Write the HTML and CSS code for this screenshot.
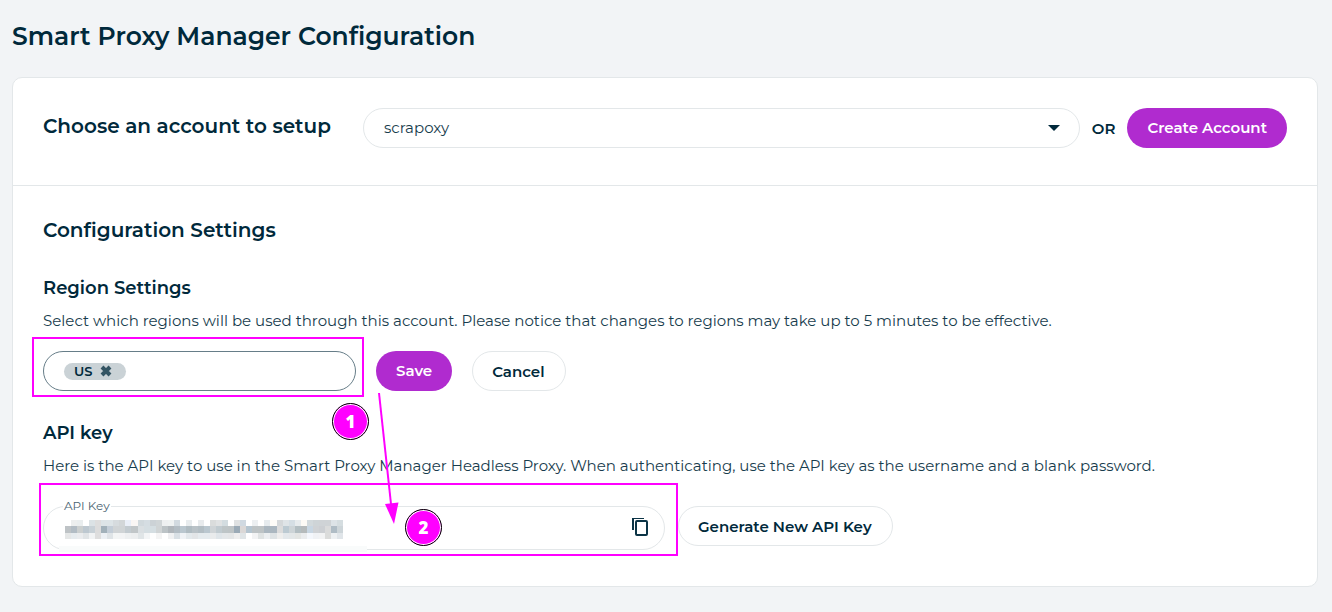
FILE: index.html
```html
<!DOCTYPE html>
<html lang="en">
<head>
<meta charset="utf-8">
<meta name="viewport" content="width=device-width, initial-scale=1">
<title>Smart Proxy Manager Configuration</title>
<link rel="stylesheet" href="styles.css">
</head>
<body>
<main class="page">
  <h1 class="page-title">Smart Proxy Manager Configuration</h1>
  <div class="card">
    <section class="account">
      <label class="account-label" for="account">Choose an account to setup</label>
      <div class="account-controls">
        <div class="select-wrap">
          <select class="select" id="account"><option>scrapoxy</option></select>
          <svg class="caret" viewBox="0 0 12 6" aria-hidden="true"><path d="M0 0h12L6 6z"/></svg>
        </div>
        <span class="or">OR</span>
        <button class="btn btn-primary" type="button">Create Account</button>
      </div>
    </section>
    <section class="settings">
      <h2 class="section-title">Configuration Settings</h2>
      <h3 class="sub-title">Region Settings</h3>
      <p class="text">Select which regions will be used through this account. Please notice that changes to regions may take up to 5 minutes to be effective.</p>
      <div class="region-row">
        <div class="region-wrap">
          <div class="region-box">
            <span class="chip">US
              <button class="chip-remove" type="button" aria-label="Remove US"><svg viewBox="0 0 12 12" aria-hidden="true"><path d="M2 2l8 8M10 2l-8 8"/></svg></button>
            </span>
            <input class="region-input" type="text" aria-label="Regions">
          </div>
          <div class="frame frame-region"></div>
          <span class="badge badge-one">1</span>
        </div>
        <button class="btn btn-primary" type="button">Save</button>
        <button class="btn btn-outline" type="button">Cancel</button>
      </div>
      <h3 class="sub-title">API key</h3>
      <p class="text">Here is the API key to use in the Smart Proxy Manager Headless Proxy. When authenticating, use the API key as the username and a blank password.</p>
      <div class="key-row">
        <div class="key-wrap">
          <fieldset class="key-box">
            <legend class="key-legend"><label for="api-key">API Key</label></legend>
            <div class="key-inner">
              <input class="key-input" id="api-key" type="text" readonly>
              <button class="copy" type="button" aria-label="Copy API key"><svg viewBox="0 0 18 20" aria-hidden="true"><path class="copy-side" d="M2 13V1"/><path class="copy-top" d="M1 1.500h12"/><rect x="5" y="4" width="11" height="14" rx="1"/></svg></button>
            </div>
          </fieldset>
          <svg class="redaction" id="redaction" viewBox="0 0 308 32" aria-hidden="true"></svg>
          <div class="frame frame-key"></div>
          <svg class="arrow" viewBox="0 0 24 134" aria-hidden="true"><path class="arrow-line" d="M4 1L16 112"/><path d="M10 112L23.500 110.500L19 132z"/></svg>
          <span class="badge badge-two">2</span>
        </div>
        <button class="btn btn-outline btn-generate" type="button">Generate New API Key</button>
      </div>
    </section>
  </div>
</main>
<script src="redaction.js"></script>
</body>
</html>
```
FILE: styles.css
```css
* { box-sizing: border-box; }

body {
  margin: 0;
  background: #f2f4f6;
  color: #00293b;
  font-family: Montserrat, Inter, sans-serif;
  font-size: 15px;
}

button, input, select { font: inherit; color: inherit; }

.page { padding: 20px 14px 24px 12px; }
.page-title { margin: 0 0 24px; font-size: 25px; line-height: 33px; font-weight: 600; }
.card { background: #fff; border: 1px solid #e3e7e9; border-radius: 10px; }

.account {
  display: flex;
  gap: 32px;
  padding: 30px 30px 37px;
  border-bottom: 1px solid #e3e7e9;
}
.account-label { font-size: 20px; line-height: 36px; font-weight: 600; }
.account-controls { flex: 1; display: flex; align-items: center; gap: 12px; }
.select-wrap { flex: 1; position: relative; }
.select {
  display: block;
  width: 100%;
  height: 40px;
  padding: 0 40px 1px 20px;
  border: 1px solid #e3e7e9;
  border-radius: 20px;
  background: #fff;
  color: #173c4d;
  appearance: none;
}
.caret { position: absolute; right: 20px; top: 17px; width: 12px; height: 6px; fill: #00293b; pointer-events: none; }
.or { font-weight: 600; }

.btn {
  height: 40px;
  padding: 0 20px 1px;
  border: 0;
  border-radius: 20px;
  font-weight: 600;
  white-space: nowrap;
}
.btn-primary { background: #b02bcf; color: #fff; }
.btn-outline { border: 1px solid #e3e7e9; padding: 0 20px 0 19px; background: #fff; }

.settings { padding: 30px 30px 36px; }
.section-title { margin: 0 0 32px; font-size: 20px; line-height: 28px; font-weight: 600; }
.sub-title { margin: 0 0 8px; font-size: 18px; line-height: 24px; font-weight: 600; }
.text { margin: 0; line-height: 26px; color: #173c4d; }

.region-row { display: flex; gap: 20px; margin: 17px 0 30px; }
.region-wrap { position: relative; flex: 0 1 313px; }
.region-box {
  display: flex;
  align-items: center;
  height: 40px;
  padding: 0 20px;
  border: 1px solid #667d88;
  border-radius: 20px;
}
.chip {
  display: flex;
  align-items: center;
  gap: 8px;
  height: 17px;
  padding: 0 14px 0 10px;
  border-radius: 9px;
  background: #cad2d6;
  font-size: 13px;
  font-weight: 600;
}
.chip-remove { display: flex; padding: 0; border: 0; background: none; }
.chip-remove svg { width: 12px; height: 12px; fill: none; stroke: #335463; stroke-width: 4; }
.region-input, .key-input { flex: 1; min-width: 0; height: 24px; padding: 0; border: 0; outline: 0; background: none; }

.key-row { display: flex; align-items: flex-start; gap: 13px; margin-top: 19px; }
.key-wrap { position: relative; flex: 0 1 622px; }
.key-box { margin: 0; padding: 0 15px 8px 19px; border: 1px solid #e3e7e9; border-radius: 24px; }
.key-legend { padding: 0 1px; font-size: 12px; line-height: 16px; color: #4b6472; }
.key-inner { display: flex; align-items: center; height: 27px; }
.copy { display: flex; padding: 0 0 2px; border: 0; background: none; }
.copy svg { width: 18px; height: 20px; fill: none; stroke: #0c3446; stroke-width: 2; }
.copy .copy-top { stroke-width: 1; }
.btn-generate { margin-top: 8px; }

/* Annotations drawn over the form */
.redaction { position: absolute; left: 16px; top: 22px; width: 308px; height: 32px; pointer-events: none; }
.frame { position: absolute; border: 2px solid #f0f; pointer-events: none; }
.frame-region { inset: -14px -8px -6px -11px; }
.frame-key { inset: -15px -13px -6px -4px; }
.badge {
  position: absolute;
  width: 37px;
  height: 37px;
  border: 1px solid #000;
  border-radius: 50%;
  background: #f0f;
  box-shadow: inset 0 0 0 1px #fff;
  color: #fff;
  font: 800 17px/35px "Open Sans", "Noto Sans", sans-serif;
  text-align: center;
}
.badge-one { right: -13px; top: 52px; }
.badge-two { left: 362px; top: 11px; }
.arrow { position: absolute; left: 332px; top: -106px; width: 24px; height: 134px; fill: #f0f; pointer-events: none; }
.arrow-line { stroke: #f0f; stroke-width: 2; }
```
FILE: redaction.js
```js
// Pixelated cover for the API key value: three rows of coloured cells.
const rows = [
  { y: 0, h: 6, cells: "fff eceeee e9edee fff dbe2e5 ddd dde4e7 dde4e7 d6dbde d2d6d8 eaeff8 faf6f4 d1d9dd d5dde2 ccd2d6 d0d5d7 eef0f1 eff2f2 d2dae0 fff e8ecee fff e8ebed fff dadcdc e0e2e3 d3dce0 fff dfe1e2 d0d9e1 fff eceff1 fff e6ebee fefcf8 d5d8da dfe4e7 d5dee4 e7ebed fdfaf5 d2d9dc ced4d7 cfd3d6 cfd3d6 dde3e7 d5dde0" },
  { y: 6, h: 7, cells: "bec3c6 b2bcc4 cbcfcf bdc8d0 c8d1d7 dcdcdc a2b1ba c3cdd7 d0d4d6 d0d4d6 c3cbd0 c1c6c8 dadfe2 d5dee2 d5dee2 d0d4d5 bcc3c6 b0b6bb b3bdc4 bac7cf b0bcc2 b9c2c7 b3bec4 bac7cf cfd4d7 c1cbd0 bec5c7 bec4c6 9baab6 dbd8d7 b5c5d0 bdc3c5 bdc3c5 abb7c0 abb7c0 dcdcdc bccad2 cdd4d7 b3bec2 b5babb c8d6e2 cfd2d5 cccfd3 dadbdb afbcc5 cdd5d9" },
  { y: 13, h: 6, cells: "e5e7e7 e6ebee eaecee e0e4e6 f1f3f4 dedede ecf0f4 dfe4e7 f3f5f5 f3f4f5 eef0f1 eceeef e0e5e7 f3f5f6 fefefe f4f4f4 fff f0f1f2 d9e0e5 f0f3f6 e3e9ec e2e5e7 e5ebee e5ebee e9ebec dfe5e9 e4e7e9 e4e6e7 eee e0e5e7 fff f2f3f4 dfe3e3 eceff1 dee3e5 eeeeed e3e8eb e3e7e8 e3e5e3 eaecee f4f7fc f0f2f5 f2f3f4 dbdcdb edf0f2 e0e5e9" }
];

const svg = document.getElementById("redaction");

function addRect(x, y, width, height, fill) {
  const rect = document.createElementNS("http://www.w3.org/2000/svg", "rect");
  for (const [name, value] of Object.entries({ x, y, width, height, fill })) {
    rect.setAttribute(name, value);
  }
  svg.appendChild(rect);
}

rows.forEach(row => {
  row.cells.split(" ").forEach((color, i) => {
    const start = 6 + Math.round(i * 278 / 46);
    const end = 6 + Math.round((i + 1) * 278 / 46);
    addRect(start, row.y, end - start, row.h, "#" + color);
  });
});
addRect(0, 26, 308, 6, "#f9fbfb");
```
